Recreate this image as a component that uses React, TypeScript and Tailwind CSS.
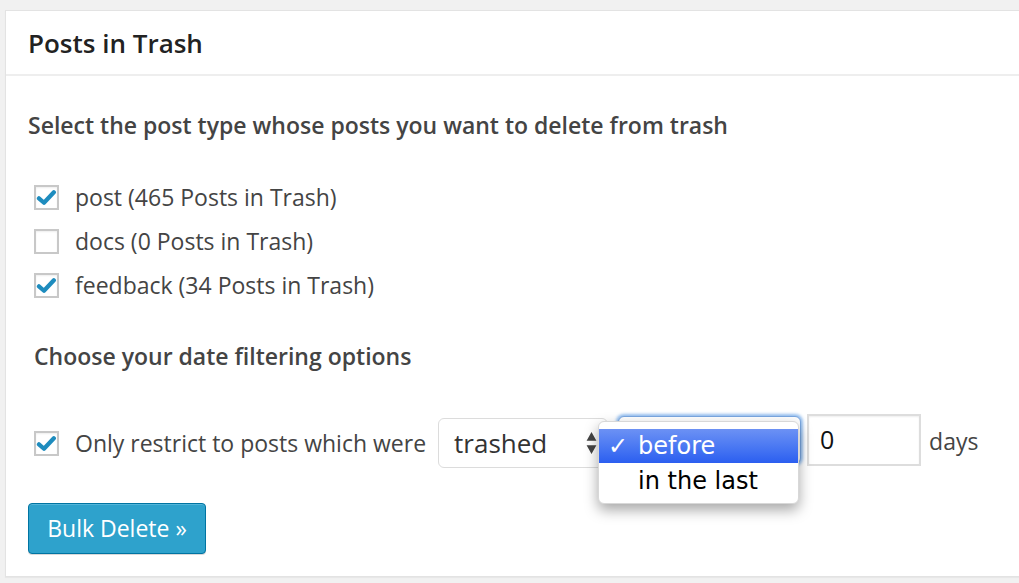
function Check() {
  return (
    <svg viewBox="0 0 20 20" className="w-[21px] h-[21px]">
      <path d="M2.8 10.8 L7.6 15 L17 5" fill="none" stroke="#1e8cbe" strokeWidth="4" strokeLinecap="round" strokeLinejoin="round" />
    </svg>
  );
}

function Box({ checked }: { checked: boolean }) {
  return (
    <span className="w-[25px] h-[25px] shrink-0 border-2 border-[#c8c8c8] bg-white flex items-center justify-center shadow-[inset_0_1px_2px_rgba(0,0,0,0.07)]">
      {checked && <Check />}
    </span>
  );
}

const types = [
  { name: 'post', count: 465, checked: true },
  { name: 'docs', count: 0, checked: false },
  { name: 'feedback', count: 34, checked: true },
];

export default function App() {
  return (
    <div className="min-h-screen bg-[#f1f1f1] pt-[10px] pl-[5px] overflow-hidden" style={{ fontFamily: "'Open Sans', sans-serif" }}>
      <div className="w-[1040px] bg-white border border-[#e3e3e3] shadow-[0_1px_1px_rgba(0,0,0,0.04)]">
        <div className="h-[65px] border-b-2 border-[#eeeeee] pl-[22px] flex items-center">
          <h2 className="text-[26px] leading-[32px] font-semibold text-[#222]">Posts in Trash</h2>
        </div>
        <div className="pl-[22px] pb-[22px]">
          <h3 className="mt-[35px] text-[23px] leading-[28px] font-semibold text-[#444]">
            Select the post type whose posts you want to delete from trash
          </h3>
          <div className="mt-[36px] pl-[6px]">
            {types.map((t) => (
              <label key={t.name} className="h-[44px] flex items-center gap-[16px] text-[23px] text-[#444]">
                <Box checked={t.checked} />
                <span>
                  {t.name} ({t.count} Posts in Trash)
                </span>
              </label>
            ))}
          </div>
          <h3 className="mt-[35px] pl-[6px] text-[23px] leading-[28px] font-semibold text-[#444]">
            Choose your date filtering options
          </h3>
          <div className="mt-[46px] pl-[6px] flex items-center h-[54px] text-[23px] text-[#444]">
            <Box checked />
            <span className="ml-[16px] whitespace-nowrap">Only restrict to posts which were</span>
            <div className="ml-[12px] w-[170px] shrink-0 h-[50px] border border-[#dcdcdc] rounded-[6px] flex items-center justify-between pl-[15px] pr-[10px] text-[26px] text-[#333] bg-white">
              <span>trashed</span>
              <svg viewBox="0 0 10 22" className="w-[11px] h-[24px]">
                <path d="M5 1 L9.5 9 L0.5 9 Z M5 21 L9.5 13 L0.5 13 Z" fill="#444" />
              </svg>
            </div>
            <div className="relative ml-[10px] w-[183px] shrink-0 h-[50px]">
              <div className="mt-[-2px] w-[183px] h-[48px] rounded-[6px] border border-[#7aa7e0] shadow-[0_0_3px_2px_rgba(80,150,230,0.6)] bg-white" />
              <div
                className="absolute left-[-20px] top-[3px] w-[201px] h-[83px] bg-white rounded-[6px] shadow-[0_6px_14px_rgba(0,0,0,0.35)] border border-[#d8d8d8] pt-[7px] z-10"
                style={{ fontFamily: "'DejaVu Sans', sans-serif" }}
              >
                <div className="h-[34px] bg-gradient-to-b from-[#6c91f4] to-[#2b5ef0] text-white flex items-center text-[24px]">
                  <span className="w-[39px] pl-[9px] font-bold">✓</span>
                  <span>before</span>
                </div>
                <div className="h-[36px] flex items-center pl-[39px] text-[24px] text-black">in the last</div>
              </div>
            </div>
            <div className="ml-[6px] w-[114px] shrink-0 h-[52px] mb-[6px] border-2 border-[#dddddd] flex items-center pl-[11px] text-[25px] text-[#111] shadow-[inset_0_1px_2px_rgba(0,0,0,0.07)]">
              0
            </div>
            <span className="ml-[8px] mb-[4px]">days</span>
          </div>
          <button className="mt-[33px] w-[178px] h-[51px] bg-[#2ea2cc] border border-[#0074a2] rounded-[4px] text-white text-[23px] shadow-[inset_0_1px_0_rgba(120,200,230,0.5),0_1px_0_rgba(0,0,0,0.15)]">
            Bulk Delete »
          </button>
        </div>
      </div>
    </div>
  );
}
